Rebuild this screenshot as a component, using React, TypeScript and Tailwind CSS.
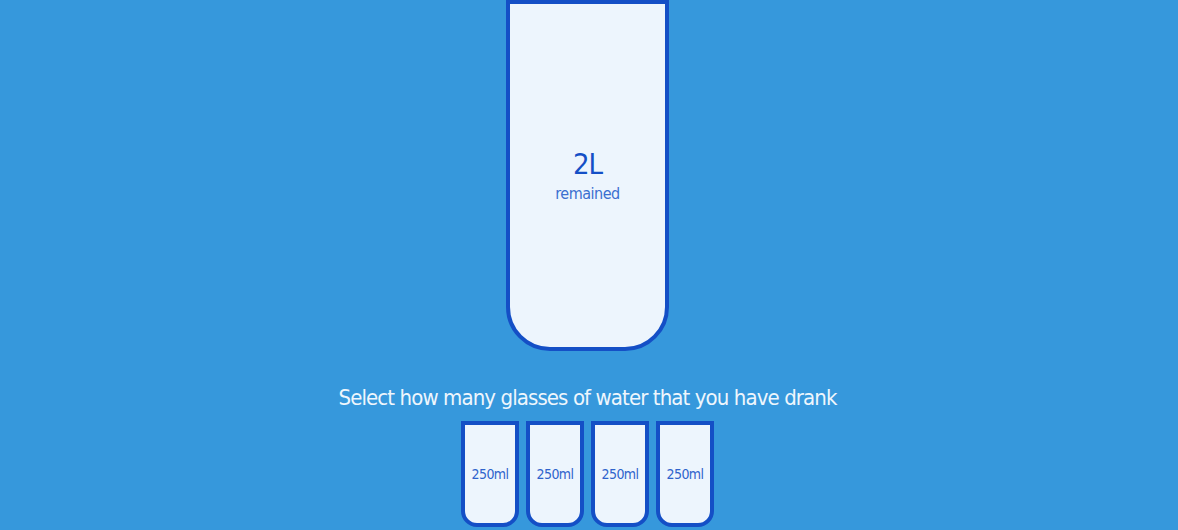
const font = { fontFamily: '"DejaVu Sans Condensed", "Liberation Sans", sans-serif' };

const SmallCup = ({ label }: { label: string }) => (
  <div className="flex h-[106px] w-[58px] cursor-pointer items-center justify-center rounded-b-[16px] border-4 border-[#144fc6] bg-[#edf5fd] text-[14px] tracking-[-0.6px] text-[#2f63cc]">
    {label}
  </div>
);

export default function App() {
  const cups = Array.from({ length: 4 }, () => "250ml");

  return (
    <div
      className="flex h-[530px] w-full flex-col items-center overflow-hidden bg-[#3698dc] pr-[3px] text-[#eef6fd]"
      style={font}
    >
      <div className="flex h-[351px] w-[163px] flex-col rounded-b-[44px] border-4 border-[#144fc6] bg-[#edf5fd] text-[#144fc6]">
        <div className="flex flex-1 flex-col items-center justify-center pt-[2px]">
          <span className="text-[29px] leading-[34px] tracking-[-1px]">2L</span>
          <small className="text-[16px] leading-[26px] tracking-[-0.5px] text-[#3b6fd0]">remained</small>
        </div>
      </div>

      <h3 className="mt-[32px] text-[22px] leading-[30px] font-normal tracking-[-0.9px]">
        Select how many glasses of water that you have drank
      </h3>

      <div className="mt-[8px] flex gap-[7px]">
        {cups.map((label, i) => (
          <SmallCup key={i} label={label} />
        ))}
      </div>
    </div>
  );
}
